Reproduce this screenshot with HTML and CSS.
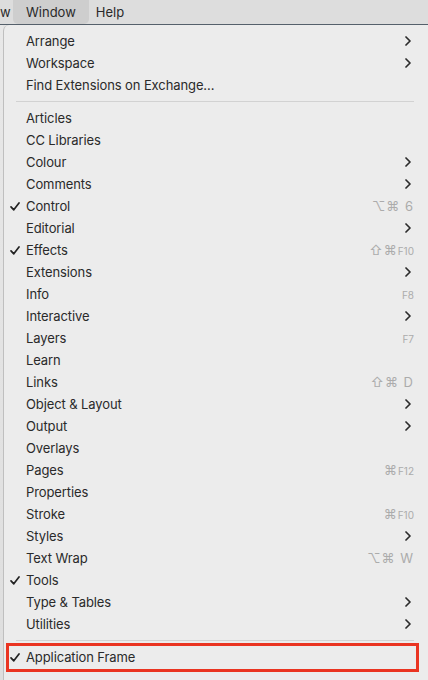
FILE: index.html
```html
<!DOCTYPE html>
<html lang="en">
<head>
    <meta charset="UTF-8">
    <meta name="viewport" content="width=device-width, initial-scale=1.0">
    <title>Window Menu</title>
    <link rel="stylesheet" href="styles.css">
</head>
<body>
    <div class="menubar">
        <span class="bar-item cut">w</span>
        <span class="bar-item active">Window</span>
        <span class="bar-item">Help</span>
    </div>
    <div class="screen">
        <div class="backdrop"></div>
        <ul class="menu">
            <li class="item"><span class="check"></span><span class="label">Arrange</span><svg class="chevron" viewBox="0 0 6 10"><path d="M1 1l4 4-4 4"/></svg></li>
            <li class="item"><span class="check"></span><span class="label">Workspace</span><svg class="chevron" viewBox="0 0 6 10"><path d="M1 1l4 4-4 4"/></svg></li>
            <li class="item"><span class="check"></span><span class="label">Find Extensions on Exchange...</span></li>
            <li class="separator"></li>
            <li class="item"><span class="check"></span><span class="label">Articles</span></li>
            <li class="item"><span class="check"></span><span class="label">CC Libraries</span></li>
            <li class="item"><span class="check"></span><span class="label">Colour</span><svg class="chevron" viewBox="0 0 6 10"><path d="M1 1l4 4-4 4"/></svg></li>
            <li class="item"><span class="check"></span><span class="label">Comments</span><svg class="chevron" viewBox="0 0 6 10"><path d="M1 1l4 4-4 4"/></svg></li>
            <li class="item"><span class="check"><svg viewBox="0 0 10 9"><path d="M1 4.8l2.8 3L9 1"/></svg></span><span class="label">Control</span><span class="shortcut">⌥⌘ 6</span></li>
            <li class="item"><span class="check"></span><span class="label">Editorial</span><svg class="chevron" viewBox="0 0 6 10"><path d="M1 1l4 4-4 4"/></svg></li>
            <li class="item"><span class="check"><svg viewBox="0 0 10 9"><path d="M1 4.8l2.8 3L9 1"/></svg></span><span class="label">Effects</span><span class="shortcut">⇧⌘<small>F10</small></span></li>
            <li class="item"><span class="check"></span><span class="label">Extensions</span><svg class="chevron" viewBox="0 0 6 10"><path d="M1 1l4 4-4 4"/></svg></li>
            <li class="item"><span class="check"></span><span class="label">Info</span><span class="shortcut"><small>F8</small></span></li>
            <li class="item"><span class="check"></span><span class="label">Interactive</span><svg class="chevron" viewBox="0 0 6 10"><path d="M1 1l4 4-4 4"/></svg></li>
            <li class="item"><span class="check"></span><span class="label">Layers</span><span class="shortcut"><small>F7</small></span></li>
            <li class="item"><span class="check"></span><span class="label">Learn</span></li>
            <li class="item"><span class="check"></span><span class="label">Links</span><span class="shortcut">⇧⌘ D</span></li>
            <li class="item"><span class="check"></span><span class="label">Object &amp; Layout</span><svg class="chevron" viewBox="0 0 6 10"><path d="M1 1l4 4-4 4"/></svg></li>
            <li class="item"><span class="check"></span><span class="label">Output</span><svg class="chevron" viewBox="0 0 6 10"><path d="M1 1l4 4-4 4"/></svg></li>
            <li class="item"><span class="check"></span><span class="label">Overlays</span></li>
            <li class="item"><span class="check"></span><span class="label">Pages</span><span class="shortcut">⌘<small>F12</small></span></li>
            <li class="item"><span class="check"></span><span class="label">Properties</span></li>
            <li class="item"><span class="check"></span><span class="label">Stroke</span><span class="shortcut">⌘<small>F10</small></span></li>
            <li class="item"><span class="check"></span><span class="label">Styles</span><svg class="chevron" viewBox="0 0 6 10"><path d="M1 1l4 4-4 4"/></svg></li>
            <li class="item"><span class="check"></span><span class="label">Text Wrap</span><span class="shortcut">⌥⌘ W</span></li>
            <li class="item"><span class="check"><svg viewBox="0 0 10 9"><path d="M1 4.8l2.8 3L9 1"/></svg></span><span class="label">Tools</span></li>
            <li class="item"><span class="check"></span><span class="label">Type &amp; Tables</span><svg class="chevron" viewBox="0 0 6 10"><path d="M1 1l4 4-4 4"/></svg></li>
            <li class="item"><span class="check"></span><span class="label">Utilities</span><svg class="chevron" viewBox="0 0 6 10"><path d="M1 1l4 4-4 4"/></svg></li>
            <li class="separator"></li>
            <li class="item highlight"><span class="check"><svg viewBox="0 0 10 9"><path d="M1 4.8l2.8 3L9 1"/></svg></span><span class="label">Application Frame</span></li>
        </ul>
    </div>
</body>
</html>
```

FILE: styles.css
```css
body {
    margin: 0;
    font-family: Inter, "Noto Sans", sans-serif;
    font-size: 13px;
    color: #2a2a2a;
    background-color: #e4e4e4;
    overflow: hidden;
}
.menubar {
    display: flex;
    align-items: stretch;
    height: 24px;
    background-color: #dddddd;
    border-bottom: 1px solid #55606b;
}
.bar-item {
    display: flex;
    align-items: center;
    color: #2a2a2a;
}
.bar-item.cut {
    width: 13px;
    overflow: hidden;
}
.bar-item.active {
    padding: 0 13px;
    background-color: #cecece;
    border-radius: 0 0 5px 5px;
}
.bar-item + .bar-item:not(.active) {
    margin-left: 7px;
}
.screen {
    display: flex;
    height: 655px;
}
.backdrop {
    width: 3px;
    flex-shrink: 0;
    background: linear-gradient(#e8e8e8, #dedede);
}
.menu {
    flex: 1;
    list-style: none;
    margin: 0;
    padding: 5px 0 0 0;
    background-color: #ececec;
    border-left: 1px solid #bfbfbf;
    border-top-left-radius: 6px;
}
.item {
    position: relative;
    display: flex;
    align-items: center;
    height: 22px;
    padding: 0 14px 0 6px;
}
.check {
    width: 16px;
    display: flex;
    align-items: center;
}
.check svg {
    width: 10px;
    height: 9px;
    fill: none;
    stroke: #222;
    stroke-width: 1.7;
    stroke-linecap: round;
    stroke-linejoin: round;
}
.label {
    flex: 1;
    white-space: nowrap;
    letter-spacing: -0.1px;
}
.chevron {
    width: 6px;
    height: 10px;
    margin-right: 3px;
    fill: none;
    stroke: #2b2b2b;
    stroke-width: 1.7;
    stroke-linecap: round;
    stroke-linejoin: round;
}
.shortcut {
    color: #ababab;
    font-size: 13px;
    letter-spacing: 1px;
}
.shortcut small {
    font-size: 10px;
    letter-spacing: 0;
}
.separator {
    height: 1px;
    margin: 5px 14px 5px 12px;
    background-color: #d2d2d2;
}
.highlight::after {
    content: "";
    position: absolute;
    top: -3px;
    bottom: -4px;
    left: 2px;
    right: 9px;
    border: 3px solid #ea3421;
    pointer-events: none;
}
```
